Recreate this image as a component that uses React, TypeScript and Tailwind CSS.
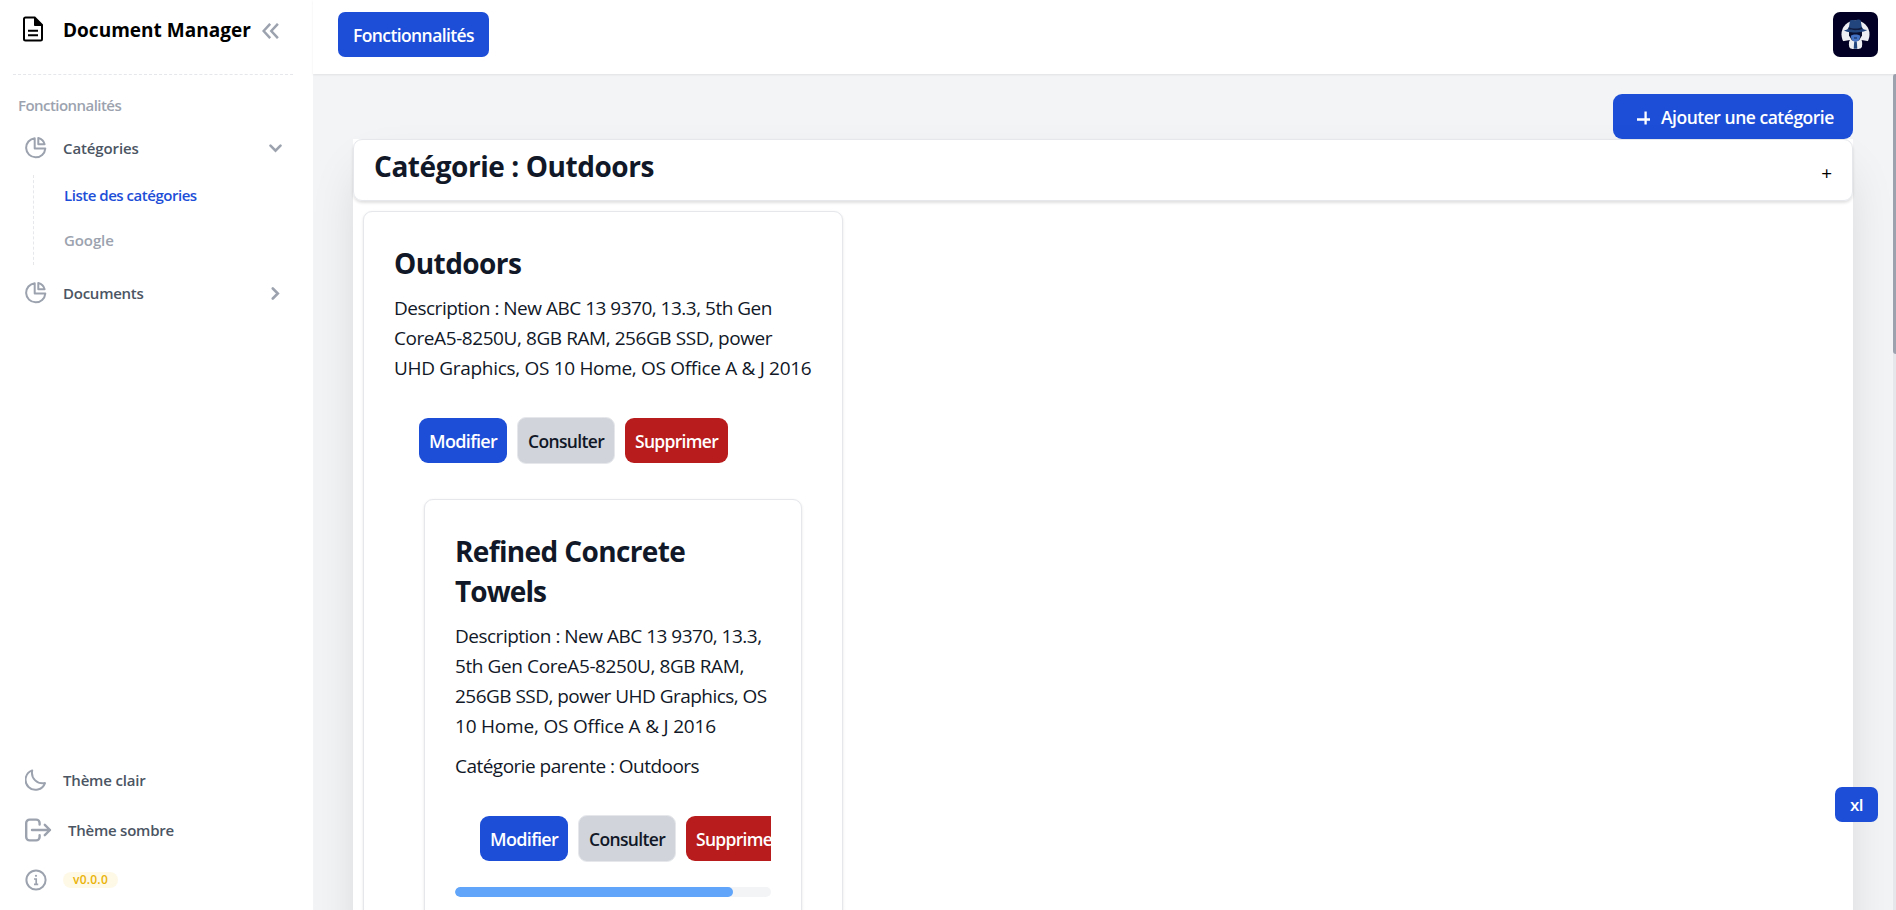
import type { ReactNode } from "react";

function PieIcon() {
  return (
    <svg width="22" height="22" viewBox="0 0 22 22" fill="none" stroke="#9ca3af" strokeWidth="2" strokeLinejoin="round">
      <path d="M9.7 1.2A9.6 9.6 0 1 0 20.3 11.6H9.7Z" />
      <path d="M13.3 1V7.3H19.6A8.4 8.4 0 0 0 13.3 1Z" />
    </svg>
  );
}

function MoonIcon() {
  return (
    <svg width="22" height="22" viewBox="0 0 22 22" fill="none" stroke="#9ca3af" strokeWidth="2" strokeLinecap="round" strokeLinejoin="round">
      <path d="M7.2 1.4A10 10 0 1 0 20 14.1C12.5 15.6 5.6 9.6 7.2 1.4Z" />
    </svg>
  );
}

function ExitIcon() {
  return (
    <svg width="27" height="24" viewBox="0 0 27 24" fill="none" stroke="#9ca3af" strokeWidth="2.4" strokeLinecap="round" strokeLinejoin="round">
      <path d="M14.6 6.5V5A3.4 3.4 0 0 0 11.2 1.6H4.6A3.4 3.4 0 0 0 1.2 5V19A3.4 3.4 0 0 0 4.6 22.4H11.2A3.4 3.4 0 0 0 14.6 19V17.3" />
      <path d="M7 12H25M19.8 6.8L25 12L19.8 17.2" />
    </svg>
  );
}

function InfoIcon() {
  return (
    <svg width="22" height="22" viewBox="0 0 22 22" fill="none" stroke="#9ca3af" strokeWidth="2">
      <circle cx="11" cy="11" r="9.6" />
      <path d="M9 10H11.2V15.2M9 15.4H13.2" strokeWidth="1.7" />
      <circle cx="11" cy="6.8" r="1.1" fill="#9ca3af" stroke="none" />
    </svg>
  );
}

function AvatarArt() {
  return (
    <svg width="45" height="45" viewBox="0 0 45 45">
      <circle cx="22.5" cy="22.5" r="14" fill="#eceef2" />
      <path d="M8 29.5L17 28L16.5 39H8ZM37 29.5L28.5 28L29 39H37Z" fill="#020024" />
      <path d="M16.5 28.5C19 27.5 26 27.5 28.6 28.5C29.6 31 29.4 34 28 36.2C24.5 37.4 20 37.4 17 36.2C15.6 34 15.6 31 16.5 28.5Z" fill="#eceef2" />
      <path d="M16 18.5H29V23.5L26 28.5H19L16 23.5Z" fill="#0a1030" />
      <path d="M18 23.5C20 22 25 22 27 23.5C27.4 26.6 25.5 29.6 22.5 29.8C19.5 29.6 17.6 26.6 18 23.5Z" fill="#4472c4" />
      <path d="M21 26H24" stroke="#15264f" strokeWidth="1" />
      <path d="M21.2 29.5H23.8L24.3 36.8H20.7Z" fill="#23457e" />
      <path d="M11 18.2C14 18 15.5 17 16 14.5L17 8.6C18.5 7.4 20.5 8.4 22 8.2C24 8 26 6.6 27.6 8L28.7 14.5C29.4 17 31 18 34.2 18C30.5 21 14.5 21.4 11 18.2Z" fill="#23457e" />
      <path d="M15.8 15.2C19 17 26 17 28.8 15.2L29.2 17C26 18.6 18.6 18.6 15.4 17Z" fill="#101c40" />
    </svg>
  );
}

function CardButtons() {
  return (
    <div className="flex h-[47px] items-center gap-[10px] overflow-hidden pl-[25px] text-[18px] leading-[27px] font-semibold whitespace-nowrap">
      <button className="flex h-[45px] w-[88px] shrink-0 items-center rounded-[9px] bg-[#1d4ed8] pt-[2px] pl-[10px] tracking-[-0.66px] text-white">
        Modifier
      </button>
      <button className="flex h-[47px] w-[98px] shrink-0 items-center rounded-[9px] border border-[#e5e7eb] bg-[#d1d5db] pt-[2px] pl-[10px] text-[17.5px] tracking-[-0.65px] text-[#111827]">
        Consulter
      </button>
      <button className="flex h-[45px] w-[103px] shrink-0 items-center rounded-[9px] bg-[#b91c1c] pt-[2px] pl-[10px] text-[17.5px] tracking-[-0.7px] text-white">
        Supprimer
      </button>
    </div>
  );
}

function Card({ className, children }: { className: string; children: ReactNode }) {
  return (
    <article className={`rounded-[9px] border border-[#e5e7eb] bg-white p-[30px] shadow-[0_1px_3px_rgba(0,0,0,0.1)] ${className}`}>
      {children}
    </article>
  );
}

function Sidebar() {
  return (
    <aside className="flex w-[313px] shrink-0 flex-col bg-white text-[15px] font-semibold whitespace-nowrap text-[#4b5563]">
      <div className="ml-[13px] flex h-[75px] w-[280px] items-start border-b border-dashed border-[#e5e7eb] pt-[16px] pl-[10px] text-black">
        <svg width="20" height="26" viewBox="0 0 20 26" fill="none" stroke="currentColor" strokeWidth="2">
          <path d="M2.5 1.5H11.7L19 9V23A1.5 1.5 0 0 1 17.5 24.5H2.5A1.5 1.5 0 0 1 1 23V3A1.5 1.5 0 0 1 2.5 1.5Z" />
          <path d="M11.5 1.5V9.5H19Z" fill="currentColor" strokeWidth="1" />
          <path d="M5 14.8H15M5 19.2H15" />
        </svg>
        <span className="ml-[20px] text-[19px] leading-[28px] font-bold tracking-[0.02px]">Document Manager</span>
        <svg className="mt-[7px] ml-[11px]" width="17" height="16" viewBox="0 0 17 16" fill="none" stroke="#9ca3af" strokeWidth="2.5">
          <path d="M8.2 .8L1.6 8L8.2 15.2M15.9 .8L9.3 8L15.9 15.2" />
        </svg>
      </div>
      <div className="mt-[20px] flex h-[21px] items-center pl-[18px] tracking-[-0.55px] text-[#9ca3af]">Fonctionnalités</div>
      <div className="mt-[17px] flex h-[30px] items-center pl-[24.5px]">
        <PieIcon />
        <span className="ml-[16.5px] tracking-[-0.12px]">Catégories</span>
        <svg className="mr-[31px] ml-auto" width="13" height="9" viewBox="0 0 13 9" fill="none" stroke="#9ca3af" strokeWidth="2.6" strokeLinecap="round">
          <path d="M1.5 1.6L6.5 6.6L11.5 1.6" />
        </svg>
      </div>
      <div className="mt-[12px] ml-[33px] flex h-[90px] flex-col border-l border-dashed border-[#e5e7eb] pl-[30px]">
        <div className="flex h-[41px] items-center tracking-[-0.47px] text-[#1d4ed8]">Liste des catégories</div>
        <div className="flex h-[49px] items-center tracking-[-0.1px] text-[#9ca3af]">Google</div>
      </div>
      <div className="mt-[13px] flex h-[30px] items-center pl-[24.5px]">
        <PieIcon />
        <span className="ml-[16.5px] tracking-[-0.25px]">Documents</span>
        <svg className="mr-[33px] ml-auto" width="9" height="13" viewBox="0 0 9 13" fill="none" stroke="#9ca3af" strokeWidth="2.6" strokeLinecap="round">
          <path d="M1.8 1.5L6.8 6.5L1.8 11.5" />
        </svg>
      </div>
      <div className="mt-auto flex h-[50px] items-center pl-[24.5px]">
        <MoonIcon />
        <span className="ml-[16.5px] tracking-[-0.18px]">Thème clair</span>
      </div>
      <div className="flex h-[50px] items-center pl-[24.5px]">
        <ExitIcon />
        <span className="ml-[16.5px] tracking-[-0.23px]">Thème sombre</span>
      </div>
      <div className="mb-[5px] flex h-[50px] items-center pl-[24.5px]">
        <InfoIcon />
        <span className="ml-[16.5px] flex h-[16px] w-[55px] items-center justify-center rounded-full bg-[#fef9e7] text-[12px] tracking-[0.24px] text-[#eab308]">
          v0.0.0
        </span>
      </div>
    </aside>
  );
}

export default function App() {
  return (
    <div className="flex h-[910px] w-full overflow-hidden bg-[#f3f4f6] font-['Open_Sans',sans-serif] text-[#111827]">
      <Sidebar />
      <div className="flex min-w-0 flex-1 flex-col">
        <header className="relative flex h-[74px] shrink-0 justify-between bg-white pt-[12px] pr-[18px] pl-[25px] shadow-[0_1px_2px_rgba(0,0,0,0.08)]">
          <button className="flex h-[45px] w-[151px] items-center rounded-[7px] bg-[#1d4ed8] pt-[2px] pl-[15px] text-[17.5px] font-semibold tracking-[-0.6px] text-white">
            Fonctionnalités
          </button>
          <div className="size-[45px] overflow-hidden rounded-[7px] bg-[#020024]">
            <AvatarArt />
          </div>
        </header>
        <div className="flex min-h-0 flex-1">
          <main className="flex-1 overflow-hidden pt-[20px] pr-[40px] pl-[40px]">
            <button className="ml-auto flex h-[45px] w-[240px] items-center rounded-[9px] bg-[#1d4ed8] pt-[2px] pl-[24px] text-[17.5px] font-semibold text-white">
              <svg width="13" height="14" viewBox="0 0 13 14" fill="none" stroke="currentColor" strokeWidth="2.3">
                <path d="M0 8.5H13M8.6 .5V13.5" />
              </svg>
              <span className="ml-[11px] tracking-[-0.48px] whitespace-nowrap">Ajouter une catégorie</span>
            </button>
            <section className="h-[1200px] bg-white shadow-[0_25px_50px_-12px_rgba(0,0,0,0.16)]">
              <div className="flex h-[62px] justify-between rounded-[9px] border border-[#e5e7eb] pt-[6px] pr-[20px] pl-[20px] shadow-[0_2px_3px_rgba(0,0,0,0.12)]">
                <h2 className="text-[28px] leading-[40px] font-bold tracking-[-0.44px]">Catégorie : Outdoors</h2>
                <span className="mt-[15px] text-[19px] leading-[24px] text-black">+</span>
              </div>
              <Card className="mt-[10px] ml-[10px] h-[1100px] w-[480px]">
                <h3 className="pt-[1px] text-[28px] leading-[40px] font-bold tracking-[-0.56px]">Outdoors</h3>
                <p className="mt-[10px] text-[19px] leading-[30px] whitespace-nowrap">
                  <span className="tracking-[-0.5px]">Description : New ABC 13 9370, 13.3, 5th Gen</span>
                  <br />
                  <span className="tracking-[-0.43px]">CoreA5-8250U, 8GB RAM, 256GB SSD, power</span>
                  <br />
                  <span className="tracking-[-0.31px]">UHD Graphics, OS 10 Home, OS Office A &amp; J 2016</span>
                </p>
                <div className="mt-[34px]">
                  <CardButtons />
                </div>
                <Card className="mt-[35px] ml-[30px] h-[700px] w-[378px]">
                  <h3 className="pt-[1px] text-[28px] leading-[40px] font-bold">
                    <span className="tracking-[-0.64px]">Refined Concrete</span>
                    <br />
                    <span className="tracking-[-0.9px]">Towels</span>
                  </h3>
                  <p className="mt-[10px] text-[19px] leading-[30px] whitespace-nowrap">
                    <span className="tracking-[-0.5px]">Description : New ABC 13 9370, 13.3,</span>
                    <br />
                    <span className="tracking-[-0.4px]">5th Gen CoreA5-8250U, 8GB RAM,</span>
                    <br />
                    <span className="tracking-[-0.53px]">256GB SSD, power UHD Graphics, OS</span>
                    <br />
                    <span className="tracking-[-0.2px]">10 Home, OS Office A &amp; J 2016</span>
                  </p>
                  <p className="mt-[10px] text-[19px] leading-[30px] tracking-[-0.53px] whitespace-nowrap">Catégorie parente : Outdoors</p>
                  <div className="mt-[34px]">
                    <CardButtons />
                  </div>
                  <div className="mt-[25px] h-[10px] overflow-hidden rounded-full bg-[#f3f4f6]">
                    <div className="h-full w-[88%] rounded-full bg-[#60a5fa]" />
                  </div>
                </Card>
              </Card>
            </section>
          </main>
          <div className="w-[3px] shrink-0 bg-[#e5e7eb]">
            <div className="h-[280px] rounded-l-[3px] bg-[#9ca3af]" />
          </div>
        </div>
      </div>
      <div className="absolute top-[787px] left-[1835px] flex h-[35px] w-[43px] items-center justify-center rounded-[7px] bg-[#1d4ed8] pt-[1px] text-[17px] font-semibold tracking-[-0.5px] text-white">
        xl
      </div>
    </div>
  );
}
